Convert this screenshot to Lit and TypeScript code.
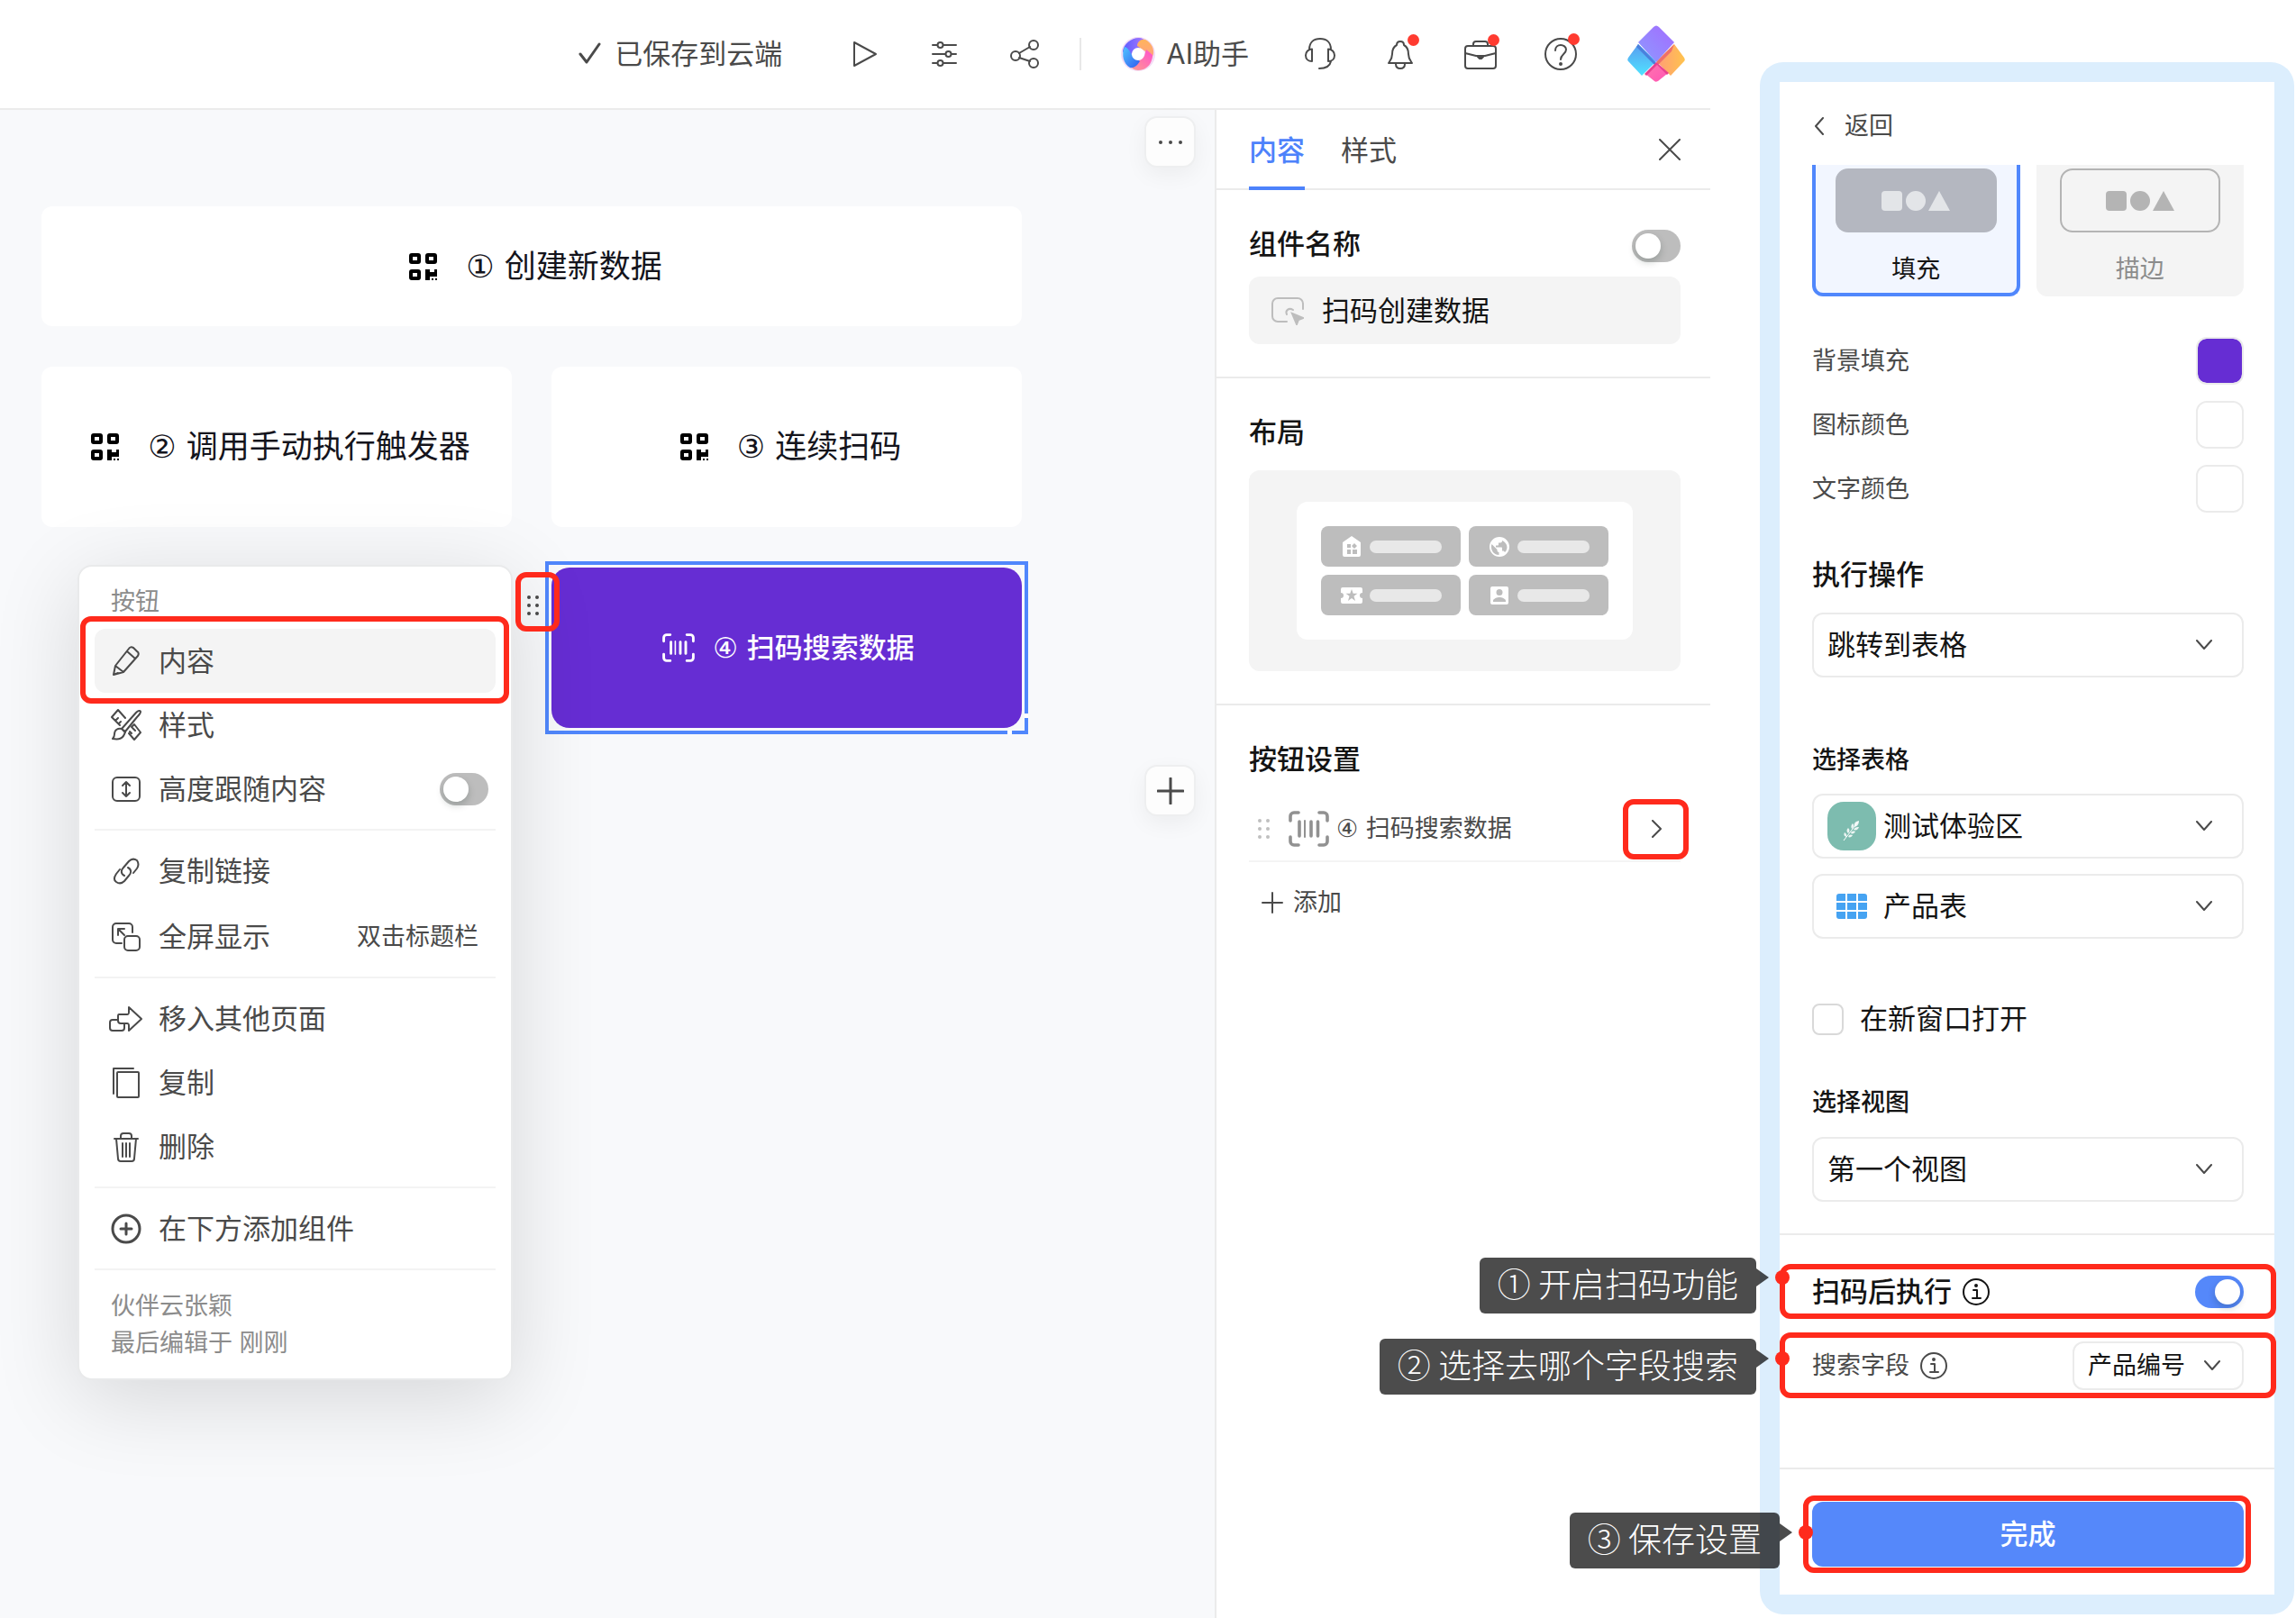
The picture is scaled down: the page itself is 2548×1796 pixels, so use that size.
import { LitElement, html, css, svg, nothing, TemplateResult } from "lit";
import { customElement, property, state } from "lit/decorators.js";
import { classMap } from "lit/directives/class-map.js";

const line = (w: number, h: number, body: unknown, sw = 2) => html`<svg
  width=${w} height=${h} viewBox="0 0 ${w} ${h}" fill="none" stroke="currentColor"
  stroke-width=${sw} stroke-linecap="round" stroke-linejoin="round" aria-hidden="true">${body}</svg>`;
const solid = (w: number, h: number, body: unknown) => html`<svg
  width=${w} height=${h} viewBox="0 0 ${w} ${h}" fill="currentColor" aria-hidden="true">${body}</svg>`;

const icons = {
  check: line(26, 26, svg`<path d="M2 13l7 9L23 2"/>`, 3),
  play: line(36, 36, svg`<path d="M7 5v26L31 18z"/>`),
  sliders: line(36, 36, svg`<path d="M5 8h5M17 8h14M5 18h14M26 18h5M5 28h5M17 28h14"/><circle cx="13.500" cy="8" r="3"/><circle cx="22.500" cy="18" r="3"/><circle cx="13.500" cy="28" r="3"/>`),
  share: line(36, 36, svg`<circle cx="8" cy="20" r="5"/><circle cx="28" cy="8" r="5"/><circle cx="28" cy="28" r="5"/><path d="M12 17l12-7M12 22l12 4"/>`),
  headset: line(36, 38, svg`<path d="M6 14C6 6 11 2 18 2s12 4 12 12M9 13.500c-4 0-7 3-7 7s3 6.500 7 6.500zM27 13.500c4 0 7 3 7 7s-3 6.500-7 6.500zM30 27c-1 5-5 8-13 8"/>`),
  bell: line(36, 36, svg`<path d="M18 4c-3 0-4 2-4 4-4 2-5 6-5 10 0 5-2 7-4 10h26c-2-3-4-5-4-10 0-4-1-8-5-10 0-2-1-4-4-4zM13 29c0 3 2 5 5 5s5-2 5-5"/>`),
  briefcase: line(36, 36, svg`<rect x="1" y="9" width="34" height="25" rx="3"/><path d="M10 9V7a3 3 0 0 1 3-3h10a3 3 0 0 1 3 3v2M1 17l12 3h10l12-3"/><path d="M15 20h6v1l-2 2h-2l-2-2z" fill="currentColor"/>`),
  help: line(38, 38, svg`<circle cx="19" cy="19" r="17"/><path d="M13 15c0-4 3-6 6-6s6 2 6 5c0 5-6 5-6 11"/><circle cx="19" cy="30" r="1"/>`),
  close: line(24, 24, svg`<path d="M1 1l22 22M23 1L1 23"/>`),
  pencil: line(32, 36, svg`<path d="M2 33l2-10L19 4c1-2 3-2 5-1l4 4c2 1 2 3 1 5L13 30zM4 23l9 7M17 7l9 8M2 33l5-2"/>`),
  brush: line(34, 36, svg`<path d="M12 22L28 4c2-2 5-3 5-1s-2 4-4 6L16 25M12 22c-4-1-8 1-8 6 0 2-1 4-2 5 6 1 12 1 14-8zM12 22l4 4M1 9l7-8 8 9M1 9l9 9M5 13l3-3M9 16l2-2M20 27l6 7 7-8-7-9-3 3M24 21l3 3M21 25l2 2"/>`),
  height: line(34, 32, svg`<rect x="2" y="3" width="30" height="26" rx="5"/><path d="M17 8v16M13 12l4-4 4 4M13 20l4 4 4-4"/>`),
  link: line(32, 32, svg`<path d="M14 21c-4-2-4-6-1-9l6-7c3-3 6-3 9-1 2 3 2 6 0 9l-4 5M18 12c4 2 4 6 1 9l-5 6c-3 3-6 3-9 1s-2-6 0-9l4-5"/>`),
  expand: line(34, 34, svg`<path d="M12 24H6a4 4 0 0 1-4-4V6a4 4 0 0 1 4-4h14a4 4 0 0 1 4 4v6"/><rect x="15" y="16" width="17" height="16" rx="4"/><path d="M8 15V8h7M8 8l7 7"/>`),
  move: line(38, 32, svg`<path d="M11 11h9c2 0 2-1 2-3V3l14 13-14 13v-5c0-2 0-3-2-3h-7c-2 0-3-1-3-3v-5c0-1 0-2 1-2zM9 17H4c-2 0-3 1-3 3v6c0 2 1 3 3 3h10c2 0 3-1 3-3v-4"/>`),
  copy: line(32, 36, svg`<rect x="6" y="6" width="24" height="28" rx="1"/><path d="M24 2H2v28"/>`),
  trash: line(30, 36, svg`<path d="M2 9h26M9 9V6c0-2 1-3 3-3h6c2 0 3 1 3 3v3M4 9l2 22c0 2 1 3 3 3h12c2 0 3-1 3-3l2-22M11 14v15M15 14v15M19 14v15"/>`),
  addCircle: line(34, 34, svg`<circle cx="17" cy="17" r="15"/><path d="M17 11v12M11 17h12"/>`, 3),
  plusBold: line(30, 30, svg`<path d="M15 1v28M1 15h28"/>`, 3),
  plus: line(24, 24, svg`<path d="M12 1v22M1 12h22"/>`),
  right: line(12, 20, svg`<path d="M2 1l9 9-9 9"/>`),
  left: line(12, 20, svg`<path d="M10 1l-8 9 8 9"/>`),
  down: line(18, 12, svg`<path d="M1 1l8 9 8-9"/>`),
  info: line(32, 32, svg`<circle cx="16" cy="16" r="14"/><path d="M13 14h4v9M12 23h9"/><circle cx="16" cy="9" r="1"/>`),
  dots: solid(28, 6, svg`<circle cx="3" cy="3" r="2"/><circle cx="14" cy="3" r="2"/><circle cx="25" cy="3" r="2"/>`),
  grip: solid(16, 24, svg`<circle cx="3" cy="3" r="2"/><circle cx="12" cy="3" r="2"/><circle cx="3" cy="12" r="2"/><circle cx="12" cy="12" r="2"/><circle cx="3" cy="21" r="2"/><circle cx="12" cy="21" r="2"/>`),
  qr: solid(32, 32, svg`<path fill-rule="evenodd" d="M3 1h7a3 3 0 0 1 3 3v6a3 3 0 0 1-3 3H3a3 3 0 0 1-3-3V4a3 3 0 0 1 3-3zm1 4v4h5V5zM21 1h7a3 3 0 0 1 3 3v6a3 3 0 0 1-3 3h-7a3 3 0 0 1-3-3V4a3 3 0 0 1 3-3zm1 4v4h5V5zM3 19h7a3 3 0 0 1 3 3v6a3 3 0 0 1-3 3H3a3 3 0 0 1-3-3v-6a3 3 0 0 1 3-3zm1 4v4h5v-4zM18 19h5v3h5v-3h3v8h-8v4h-5zM25 29h2v2h-2zM29 29h2v2h-2z"/>`),
  barcode: html`<svg class="barcode" viewBox="0 0 45 40" fill="none" stroke="currentColor" stroke-width="3.600" stroke-linecap="round" aria-hidden="true"><path d="M11 2H6a4 4 0 0 0-4 4v5M34 2h5a4 4 0 0 1 4 4v5M2 29v5a4 4 0 0 0 4 4h5M43 29v5a4 4 0 0 1-4 4h-5"/><path d="M12 12v16M25 12v16M32.500 12v16"/><path d="M18 11v18" stroke-width="2"/></svg>`,
  component: html`<svg width="36" height="32" viewBox="0 0 36 32" fill="none" stroke="currentColor" stroke-width="2" stroke-linecap="round" aria-hidden="true"><path d="M17 28H7a6 6 0 0 1-6-6V8a6 6 0 0 1 6-6h22a6 6 0 0 1 6 6v6"/><path d="M17 20c-2-4 2-8 7-5"/><path d="M23 19l12 5-5 2-2 5z" fill="currentColor"/></svg>`,
  home: solid(24, 24, svg`<path fill-rule="evenodd" d="M12 0l10 7v14a2 2 0 0 1-2 2H4a2 2 0 0 1-2-2V7zM7 9v4h4V9zm8-1l-3 3 3 3 3-3zM7 15v5h4v-5zm6 0v5h5v-5z"/>`),
  globe: solid(24, 24, svg`<path fill-rule="evenodd" d="M12 1a11 11 0 1 0 0 22 11 11 0 0 0 0-22zM3 12c0-1 0-2 .5-3l6 6v1c0 1 1 2 2 2v3C6 21 3 16.500 3 12zm15 6c-.3-.8-1-1.500-2-1.500h-1v-3c0-.6-.4-1-1-1H8v-2h2c.6 0 1-.4 1-1v-2h2c1 0 2-.9 2-2v-.5c5.500 2.200 7.500 9 3 13z"/>`),
  ticket: solid(24, 24, svg`<path fill-rule="evenodd" d="M2 3h20a2 2 0 0 1 2 2v4a3 3 0 0 0 0 6v4a2 2 0 0 1-2 2H2a2 2 0 0 1-2-2v-4a3 3 0 0 0 0-6V5a2 2 0 0 1 2-2zm10 2l-1.700 4.800H5.500l4 3L8 18l4-3 4 3-1.500-5.200 4-3h-4.800z"/>`),
  person: solid(24, 24, svg`<path fill-rule="evenodd" d="M4 2h16a2 2 0 0 1 2 2v16a2 2 0 0 1-2 2H4a2 2 0 0 1-2-2V4a2 2 0 0 1 2-2zm8 3a3.500 3.500 0 1 0 0 7 3.500 3.500 0 0 0 0-7zM5 19h14v-1c0-2.500-4.500-4-7-4s-7 1.500-7 4z"/>`),
  shapes: solid(76, 24, svg`<rect y="1" width="23" height="22" rx="4"/><circle cx="38" cy="12" r="11"/><path d="M64 1l12 22H52z"/>`),
  leaf: html`<svg width="54" height="54" viewBox="0 0 54 54" aria-hidden="true"><rect width="54" height="54" rx="18" fill="#7dbcaf"/><path d="M18 43l7-9 9-12" stroke="#fff" stroke-width="1" fill="none"/><g fill="#fff" opacity="0.85"><path d="M35 21c-5 1-6 4-5 7 4-1 5-4 5-7zM28 24c-2 2-2 4-1 6 2-1 3-4 1-6zM23 29c-2 2-2 4 0 6 2-2 2-4 0-6zM19 34c-1 2-1 4 2 5 1-2 0-4-2-5zM35 28c-4 0-5 1-6 3 3 1 5 0 6-3zM31 33c-3-1-5 0-5 2 2 1 4 0 5-2zM28 37c-2-1-4-1-5 2 2 1 4 0 5-2z"/></g></svg>`,
  table: html`<svg width="54" height="28" viewBox="0 0 54 28" fill="#46a3f2" aria-hidden="true"><path d="M13 0h7v8H10V3a3 3 0 0 1 3-3zM22 0h10v8H22zM34 0h7a3 3 0 0 1 3 3v5H34zM10 10h10v8H10zM22 10h10v8H22zM34 10h10v8H34zM10 20h10v8h-7a3 3 0 0 1-3-3zM22 20h10v8H22zM34 20h10v5a3 3 0 0 1-3 3h-7z"/></svg>`,
  assistant: html`<svg width="40" height="40" viewBox="0 0 40 40" fill="none" aria-hidden="true">
    <defs>
      <linearGradient id="a1" x1="0" y1="0" x2="1" y2="0"><stop offset="0" stop-color="#5a5cff"/><stop offset="1" stop-color="#b07bff"/></linearGradient>
      <linearGradient id="a2" x1="0" y1="0" x2="0" y2="1"><stop offset="0" stop-color="#ffb45c"/><stop offset="1" stop-color="#ff9d8a"/></linearGradient>
      <linearGradient id="a3" x1="0" y1="1" x2="1" y2="0"><stop offset="0" stop-color="#ff9f8a"/><stop offset="1" stop-color="#ff4fd0"/></linearGradient>
      <linearGradient id="a4" x1="0" y1="0" x2="1" y2="1"><stop offset="0" stop-color="#52c4ff"/><stop offset="1" stop-color="#2f5cf0"/></linearGradient>
    </defs>
    <circle cx="20" cy="20" r="19" fill="#f3dcf6"/>
    <path d="M3 17C4 9 12 2 21 2c4 0 8 3 9 7L13 19l-3 10z" fill="url(#a1)"/>
    <path d="M28 4c6 3 10 9 9 16-1 4-3 7-6 8l-3-11-9-6c0-4 4-8 9-7z" fill="url(#a2)"/>
    <path d="M36 21c0 9-6 17-16 17-5 0-8-3-10-8l17-8 2-7z" fill="url(#a3)"/>
    <path d="M5 12c-4 9-1 19 6 23 4 1 8-2 11-7l-9-7c-2-4-4-8-8-9z" fill="url(#a4)"/>
    <circle cx="20" cy="20" r="7" fill="#fff"/>
  </svg>`,
  brand: html`<svg width="64" height="64" viewBox="0 0 64 64" aria-hidden="true">
    <defs>
      <linearGradient id="b1" x1="0" y1="1" x2="1" y2="0"><stop offset="0" stop-color="#8d9bff"/><stop offset="1" stop-color="#a36bff"/></linearGradient>
      <linearGradient id="b2" x1="0" y1="0" x2="0" y2="1"><stop offset="0" stop-color="#5a9cf0"/><stop offset="1" stop-color="#4fe3ff"/></linearGradient>
      <linearGradient id="b3" x1="0" y1="0" x2="1" y2="0"><stop offset="0" stop-color="#ff9c78"/><stop offset="1" stop-color="#ffc34d"/></linearGradient>
      <linearGradient id="b4" x1="0" y1="0" x2="1" y2="1"><stop offset="0" stop-color="#ff78ae"/><stop offset="1" stop-color="#ff55b4"/></linearGradient>
    </defs>
    <path d="M12 21L1 36c-1 2-1 3 0 4l15 16 16-16z" fill="url(#b2)"/>
    <path d="M52 21l11 15c1 2 1 3 0 4L48 56 32 40z" fill="url(#b3)"/>
    <path d="M12 21l20 21-2 2-20-20z" fill="#4a80dd"/>
    <path d="M52 21l-3 8-15 15-2-3z" fill="#ee6f6a"/>
    <path d="M32 42l12 12-10 8c-2 1-3 1-4 0L20 54z" fill="url(#b4)"/>
    <path d="M32 41l-13 13 2 2 12-12 11 11 2-2z" fill="#e8408f"/>
    <path d="M29 2c2-2 4-2 6 0l17 17-20 22-20-22z" fill="url(#b1)"/>
  </svg>`,
};

const base = css`
  * { box-sizing: border-box; }
  :host {
    display: block; box-sizing: border-box; color: #4a4a4a;
    font: 31px/40px Inter, "Noto Sans CJK SC", sans-serif;
  }
  svg { display: block; flex: none; }
  button, input, select {
    font: inherit; color: inherit; margin: 0; padding: 0; border: 0; background: none;
    appearance: none; outline: none; text-align: inherit;
  }
  button, select, label { cursor: pointer; }
  h2, h3, p { margin: 0; }
  h2 { font: inherit; font-weight: 500; color: #141414; }
  .numbered { font-family: "DejaVu Sans", "Noto Sans CJK SC", sans-serif; }
  .switch {
    flex: none; width: 54px; height: 36px; border-radius: 18px; background: #bdbdbd; padding: 4px;
    display: flex; align-items: center;
  }
  .switch::before {
    content: ""; width: 28px; height: 28px; border-radius: 50%; background: #fff;
    box-shadow: 0 4px 8px rgba(0, 30, 20, 0.2);
  }
  .switch:checked { background: #5588fa; justify-content: flex-end; }
  .mark {
    position: absolute; inset: 0; border: 6px solid #ff2a1c; border-radius: 12px; pointer-events: none; z-index: 2;
  }
`;

@customElement("top-bar")
class TopBar extends LitElement {
  static styles = [base, css`
    .bar {
      display: flex; align-items: center; justify-content: flex-end; height: 122px;
      padding-right: 28px; background: #fff; border-bottom: 2px solid #ebebeb;
    }
    .saved { display: flex; align-items: center; gap: 14px; margin-right: 72px; }
    .group { display: flex; align-items: center; gap: 52px; }
    .rule { width: 2px; height: 36px; background: #e8e8e8; margin: 0 43px; }
    .assistant { display: flex; align-items: center; gap: 11px; margin-right: 60px; }
    .tool { position: relative; display: flex; justify-content: center; width: 37px; }
    .tool.alert::after {
      content: ""; position: absolute; top: -4px; right: -3px; width: 13px; height: 13px;
      border-radius: 50%; background: #ff3b30;
    }
    .brand { margin-left: 56px; }
  `];
  render() {
    const tool = (name: string, icon: TemplateResult, alert = false) =>
      html`<button class=${classMap({ tool: true, alert })} aria-label=${name}>${icon}</button>`;
    return html`<header class="bar">
      <div class="saved">${icons.check}<span>已保存到云端</span></div>
      <div class="group">${tool("预览", icons.play)}${tool("设置", icons.sliders)}${tool("分享", icons.share)}</div>
      <div class="rule"></div>
      <button class="assistant">${icons.assistant}<span>AI助手</span></button>
      <div class="group">
        ${tool("客服", icons.headset)}${tool("通知", icons.bell, true)}${tool("工具箱", icons.briefcase, true)}${tool("帮助", icons.help, true)}
      </div>
      <button class="brand" aria-label="账号">${icons.brand}</button>
    </header>`;
  }
}

@customElement("component-menu")
class ComponentMenu extends LitElement {
  static styles = [base, css`
    .menu {
      width: 483px; padding: 19px 17px; background: #fff; border: 2px solid #e9eaeb; border-radius: 16px;
      box-shadow: 0 20px 96px rgba(0, 0, 0, 0.14);
    }
    .title, .meta { padding: 0 18px; font-size: 27px; color: #8c8c8c; }
    .title { margin-bottom: 10px; }
    .group { border-bottom: 2px solid #f3f3f3; padding-bottom: 9px; margin-bottom: 9px; }
    .item {
      position: relative; display: flex; align-items: center; gap: 17px; width: 100%; height: 71px;
      padding: 0 8px 0 16px; border-radius: 12px;
    }
    .item.hinted { height: 73px; padding-top: 2px; }
    .item.active { background: #f4f4f4; }
    .icon { display: flex; justify-content: center; width: 38px; }
    .name { flex: 1; }
    .hint { font-size: 27px; padding-right: 11px; }
    .mark { inset: -14px -15px -12px -16px; }
    .meta { padding-top: 10px; line-height: 41px; }
  `];
  render() {
    const item = (icon: TemplateResult, name: string, hint = "", active = false) => html`
      <button class=${classMap({ item: true, active, hinted: !!hint })}>
        <span class="icon">${icon}</span><span class="name">${name}</span>
        ${hint ? html`<span class="hint">${hint}</span>` : nothing}
        ${active ? html`<span class="mark"></span>` : nothing}
      </button>`;
    return html`<div class="menu">
      <p class="title">按钮</p>
      <div class="group">
        ${item(icons.pencil, "内容", "", true)}
        ${item(icons.brush, "样式")}
        <label class="item"><span class="icon">${icons.height}</span><span class="name">高度跟随内容</span>
          <input class="switch" type="checkbox" /></label>
      </div>
      <div class="group">${item(icons.link, "复制链接")}${item(icons.expand, "全屏显示", "双击标题栏")}</div>
      <div class="group">${item(icons.move, "移入其他页面")}${item(icons.copy, "复制")}${item(icons.trash, "删除")}</div>
      <div class="group">${item(icons.addCircle, "在下方添加组件")}</div>
      <div class="meta"><p>伙伴云张颖</p><p>最后编辑于 刚刚</p></div>
    </div>`;
  }
}

@customElement("page-canvas")
class PageCanvas extends LitElement {
  static styles = [base, css`
    :host { position: relative; flex: 1; min-width: 0; background: #f8f9fb; }
    .board {
      display: grid; grid-template-columns: 1fr 1fr; grid-template-rows: 133px 178px 178px;
      gap: 45px 44px; padding: 107px 214px 0 46px;
    }
    .card {
      display: flex; align-items: center; justify-content: center; gap: 22px; width: 100%; height: 100%;
      background: #fff; border-radius: 12px; font-size: 35px; color: #14141c;
    }
    .wide { grid-column: 1 / -1; }
    .icon { display: flex; justify-content: center; width: 50px; color: #000; }
    .picked { position: relative; grid-column: 2; }
    .picked .card { background: #662dd3; color: #fff; font-size: 31px; font-weight: 500; gap: 16px; border-radius: 20px; }
    .picked .icon { width: 44px; color: #fff; }
    .barcode { width: 36px; height: 32px; }
    .frame { position: absolute; inset: -7px; border: 4px solid #5087fc; pointer-events: none; }
    .frame::before, .frame::after { content: ""; position: absolute; background: #fff; }
    .frame::before { right: -4px; bottom: 14px; width: 4px; height: 5px; }
    .frame::after { bottom: -4px; right: 14px; width: 5px; height: 4px; }
    .handle {
      position: absolute; left: -40px; top: 5px; width: 49px; height: 66px; display: flex;
      align-items: center; padding: 8px 0 0 12px;
    }
    .float {
      position: absolute; right: 21px; width: 57px; height: 57px; display: flex; align-items: center;
      justify-content: center; background: #fdfdfd; border: 2px solid #eeeff0; border-radius: 14px;
      box-shadow: 0 8px 24px rgba(0, 0, 0, 0.05);
    }
    .more { top: 7px; }
    .add { top: 727px; }
    component-menu { position: absolute; left: 86px; top: 505px; z-index: 1; }
  `];
  render() {
    const card = (label: string) => html`<button class="card"><span class="icon">${icons.qr}</span><span class="numbered">${label}</span></button>`;
    return html`
      <div class="board">
        <div class="wide">${card("① 创建新数据")}</div>
        <div>${card("② 调用手动执行触发器")}</div>
        <div>${card("③ 连续扫码")}</div>
        <div class="picked">
          <button class="card"><span class="icon">${icons.barcode}</span><span class="numbered">④ 扫码搜索数据</span></button>
          <div class="frame"></div>
          <button class="handle" aria-label="拖动">${icons.grip}<span class="mark"></span></button>
        </div>
      </div>
      <button class="float more" aria-label="更多">${icons.dots}</button>
      <button class="float add" aria-label="添加">${icons.plusBold}</button>
      <component-menu></component-menu>`;
  }
}

@customElement("content-panel")
class ContentPanel extends LitElement {
  static styles = [base, css`
    :host { flex: none; width: 550px; background: #fff; border-left: 2px solid #ebebeb; }
    .tabs { display: flex; gap: 40px; height: 89px; padding: 0 33px 0 36px; border-bottom: 2px solid #ebebeb; }
    .tab { height: 89px; }
    .tab.on { color: #4d82fb; font-weight: 500; border-bottom: 4px solid #4d82fb; padding-top: 4px; }
    .close { margin-left: auto; }
    section { padding: 40px 33px 36px 36px; border-bottom: 2px solid #ebebeb; }
    section:last-child { border-bottom: 0; }
    .head { display: flex; justify-content: space-between; align-items: flex-end; }
    .field {
      display: flex; align-items: center; gap: 20px; height: 75px; margin-top: 16px; padding: 0 25px;
      background: #f4f4f4; border-radius: 12px; color: #bdbdbd;
    }
    .field input { flex: 1; min-width: 0; color: #141414; }
    .layout { margin-top: 22px; padding: 35px 53px; background: #f4f4f4; border-radius: 12px; }
    .sheet {
      display: grid; grid-template-columns: 1fr 1fr; gap: 9px; padding: 27px; background: #fff; border-radius: 12px;
    }
    .mini {
      display: flex; align-items: center; justify-content: center; gap: 8px; height: 45px;
      border-radius: 8px; background: #bdbdbd; color: #fff;
    }
    .mini i { width: 80px; height: 14px; border-radius: 7px; background: #e8e8e8; }
    .row {
      position: relative; display: flex; align-items: center; height: 72px; margin-top: 22px;
      border-bottom: 2px solid #f4f4f4; font-size: 27px; padding-left: 9px;
    }
    .grip { display: flex; color: #bfbfbf; margin-right: 19px; }
    .barcode { width: 45px; height: 40px; color: #919191; margin-right: 8px; }
    .go { position: relative; width: 73px; height: 67px; margin: 0 -9px 0 auto; display: flex; align-items: center; justify-content: center; }
    .append { display: flex; align-items: center; gap: 11px; margin-top: 25px; padding-left: 14px; font-size: 27px; }
  `];
  render() {
    return html`
      <nav class="tabs">
        <button class="tab on">内容</button><button class="tab">样式</button>
        <button class="close" aria-label="关闭">${icons.close}</button>
      </nav>
      <section>
        <div class="head"><h2 id="nm">组件名称</h2><input class="switch" type="checkbox" aria-label="显示组件名称" /></div>
        <div class="field">${icons.component}<input type="text" aria-labelledby="nm" .value=${"扫码创建数据"} /></div>
      </section>
      <section>
        <h2>布局</h2>
        <div class="layout"><div class="sheet">
          ${[icons.home, icons.globe, icons.ticket, icons.person].map((i) => html`<div class="mini">${i}<i></i></div>`)}
        </div></div>
      </section>
      <section>
        <h2>按钮设置</h2>
        <div class="row">
          <span class="grip">${icons.grip}</span>${icons.barcode}<span class="numbered">④ 扫码搜索数据</span>
          <button class="go" aria-label="编辑按钮">${icons.right}<span class="mark"></span></button>
        </div>
        <button class="append">${icons.plus}<span>添加</span></button>
      </section>`;
  }
}

@customElement("step-callout")
class StepCallout extends LitElement {
  @property() text = "";
  static styles = css`
    :host { position: absolute; left: -11px; display: block; width: 16px; height: 16px; }
    .dot { width: 16px; height: 16px; border-radius: 50%; background: #ff2a1c; }
    .tip {
      position: absolute; right: 37px; top: -14px; padding: 0 20px; height: 62px; border-radius: 6px;
      background: rgba(0, 0, 0, 0.7); color: #fff; white-space: nowrap;
      font: 300 37px/57px "Noto Sans CJK SC", sans-serif;
    }
    .tip::after {
      content: ""; position: absolute; left: 100%; top: 12px; border: 10px solid transparent;
      border-left: 14px solid rgba(0, 0, 0, 0.7); border-right: 0;
    }
  `;
  render() {
    return html`<div class="dot"></div><div class="tip">${this.text}</div>`;
  }
}

@customElement("button-settings")
class ButtonSettings extends LitElement {
  @state() private fill = "填充";
  static styles = [base, css`
    :host { flex: none; width: 593px; padding: 22px; background: #dceefd; border-radius: 26px; }
    .sheet { background: #fff; padding-bottom: 31px; }
    .body { padding: 0 34px 0 36px; }
    .back { display: flex; align-items: center; gap: 22px; height: 92px; padding: 6px 0 0 2px; font-size: 27px; }
    .options { display: grid; grid-template-columns: 1fr 1fr; gap: 18px; }
    .option {
      position: relative; height: 146px; padding: 4px 26px; background: #f4f4f4; border-radius: 0 0 12px 12px;
      font-size: 27px; text-align: center; color: #8c8c8c;
    }
    .option.on { background: #f2f6ff; color: #141414; border: solid #5087fc; border-width: 0 4px 4px; padding: 4px 22px; }
    .option input { position: absolute; opacity: 0; }
    .sample {
      display: flex; align-items: center; justify-content: center; height: 71px; margin-bottom: 21px;
      border: 2px solid #b4b4b4; border-radius: 14px; color: #b4b4b4;
    }
    .on .sample { background: #b4b7c0; border-color: #b4b7c0; color: #e3e5e8; }
    .colors { margin-top: 36px; }
    .color { display: flex; align-items: center; justify-content: space-between; height: 71px; font-size: 27px; }
    .color input { width: 53px; height: 53px; border: 2px solid #ebebeb; border-radius: 12px; overflow: hidden; cursor: pointer; }
    .color input::-webkit-color-swatch-wrapper { padding: 0; }
    .color input::-webkit-color-swatch { border: 0; border-radius: 9px; }
    h2 { margin: 40px 0 22px; }
    h3 { margin: 72px 0 17px; font: inherit; font-size: 27px; font-weight: 500; color: #141414; }
    .pick { position: relative; display: block; height: 72px; margin-bottom: 17px; }
    .pick select {
      width: 100%; height: 100%; border: 2px solid #ebebeb; border-radius: 12px; padding: 0 70px 0 15px; color: #141414;
    }
    .pick .lead { position: absolute; left: 17px; top: 0; height: 100%; display: flex; align-items: center; pointer-events: none; }
    .pick.has select { padding-left: 77px; }
    .pick .arrow { position: absolute; right: 35px; top: 0; height: 100%; display: flex; align-items: center; pointer-events: none; }
    .check { display: flex; align-items: center; gap: 18px; margin-top: 69px; color: #141414; }
    .check input { width: 35px; height: 35px; border: 2px solid #d9d9d9; border-radius: 8px; }
    .check input:checked { background: #5588fa; }
    .view { margin: 53px 0 18px; }
    .last { margin-bottom: 35px; }
    .step { position: relative; display: flex; align-items: center; gap: 11px; padding: 0 34px 0 36px; }
    .rule { height: 2px; background: #ebebeb; }
    .scan { height: 61px; margin-top: 32px; color: #141414; font-weight: 500; }
    .search { height: 73px; margin: 15px 0 77px; font-size: 27px; }
    .scan .switch, .search .pick { margin: 0 0 0 auto; }
    .search .pick { width: 190px; height: 54px; }
    .search .pick select { padding-right: 40px; }
    .search .arrow { right: 26px; }
    .finish { position: relative; margin: 36px 34px 0 36px; }
    .done { width: 100%; height: 72px; border-radius: 12px; background: #5588fa; color: #fff; text-align: center; font-weight: 500; }
    .scan .mark, .search .mark { inset: 0 -2px 0 0; }
    .finish .mark { inset: -7px -8px -7px -10px; }
    .scan step-callout { top: 1px; }
    .search step-callout { top: 15px; }
    .finish step-callout { top: 27px; }
  `];
  render() {
    const option = (name: string) => html`
      <label class=${classMap({ option: true, on: this.fill === name })}>
        <input type="radio" name="fill" .checked=${this.fill === name} @change=${() => (this.fill = name)} />
        <div class="sample">${icons.shapes}</div>${name}
      </label>`;
    const color = (name: string, value: string) => html`
      <label class="color">${name}<input type="color" .value=${value} /></label>`;
    const pick = (label: string, value: string, lead?: TemplateResult, cls = "") => html`
      <div class="pick ${lead ? "has" : ""} ${cls}">
        <select aria-label=${label}><option>${value}</option></select>
        ${lead ? html`<span class="lead">${lead}</span>` : nothing}
        <span class="arrow">${icons.down}</span>
      </div>`;
    return html`<div class="sheet">
      <div class="body">
        <button class="back">${icons.left}<span>返回</span></button>
        <div class="options">${option("填充")}${option("描边")}</div>
        <div class="colors">${color("背景填充", "#662dd3")}${color("图标颜色", "#ffffff")}${color("文字颜色", "#ffffff")}</div>
        <h2>执行操作</h2>
        ${pick("执行操作", "跳转到表格")}
        <h3>选择表格</h3>
        ${pick("工作区", "测试体验区", icons.leaf)}
        ${pick("选择表格", "产品表", icons.table)}
        <label class="check"><input type="checkbox" />在新窗口打开</label>
        <h3 class="view">选择视图</h3>
        ${pick("选择视图", "第一个视图", undefined, "last")}
      </div>
      <div class="rule"></div>
      <div class="step scan">
        <label for="scan">扫码后执行</label>${icons.info}
        <input id="scan" class="switch" type="checkbox" checked />
        <div class="mark"><step-callout text="① 开启扫码功能"></step-callout></div>
      </div>
      <div class="step search">
        <span>搜索字段</span>${icons.info}
        ${pick("搜索字段", "产品编号")}
        <div class="mark"><step-callout text="② 选择去哪个字段搜索"></step-callout></div>
      </div>
      <div class="rule"></div>
      <div class="finish">
        <button class="done">完成</button>
        <div class="mark"><step-callout text="③ 保存设置"></step-callout></div>
      </div>
    </div>`;
  }
}

@customElement("app-root")
class AppRoot extends LitElement {
  static styles = css`
    :host { display: block; background: #fff; }
    .page { display: flex; align-items: flex-start; min-height: 100vh; }
    .editor { flex: 1; min-width: 0; min-height: 100vh; display: flex; flex-direction: column; }
    .work { flex: 1; display: flex; }
    button-settings { margin: 69px 2px 5px 55px; }
  `;
  render() {
    return html`<div class="page">
      <main class="editor">
        <top-bar></top-bar>
        <div class="work"><page-canvas></page-canvas><content-panel></content-panel></div>
      </main>
      <button-settings></button-settings>
    </div>`;
  }
}
